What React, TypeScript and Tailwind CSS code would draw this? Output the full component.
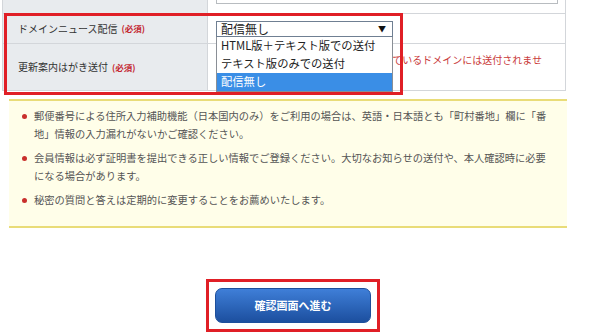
import React from "react";

const Req = () => (
  <span className="ml-[4px] text-[8.5px] font-bold text-[#c4262e]">(必須)</span>
);

const Bullet = ({ children }: { children: React.ReactNode }) => (
  <li className="flex">
    <span className="mt-[7px] ml-[13px] mr-[7px] h-[5px] w-[5px] shrink-0 rounded-full bg-[#c9302c]" />
    <span>{children}</span>
  </li>
);

export default function App() {
  return (
    <div className="relative h-[335px] w-[600px] overflow-hidden bg-white font-['Noto_Sans_CJK_JP','Noto_Sans',sans-serif] text-[#333]">
      {/* form table */}
      <div className="ml-[2px] grid w-[564px] grid-cols-[205px_1fr] border-x border-[#d3d6da]">
        {/* partial top row */}
        <div className="h-[14px] border-b border-r border-[#d3d6da] bg-[#e8ebee]" />
        <div className="h-[14px] border-b border-[#d3d6da] bg-white pl-[8px]">
          <div className="h-[4px] w-[342px] border-x border-b border-[#b8bcc0]" />
        </div>

        {/* row 1 */}
        <div className="flex h-[30px] items-center border-b border-r border-[#d3d6da] bg-[#e8ebee] pl-[15px] text-[10px] leading-none">
          ドメインニュース配信
          <Req />
        </div>
        <div className="relative z-10 h-[30px] border-b border-[#d3d6da] bg-white pl-[8px] pt-[7px]">
          <div className="relative w-[177px]">
            <div className="flex h-[16px] items-center justify-between border border-[#6f7f92] bg-white pl-[4px] pr-[6px] text-[12px] leading-none text-[#222]">
              <span>配信無し</span>
              <span className="text-[8px] text-[#111]">▼</span>
            </div>
            <div className="absolute left-0 top-full w-[177px] whitespace-nowrap border-x border-b border-[#8a8f96] bg-white text-[11.3px] leading-none text-[#222]">
              <div className="flex h-[18px] items-center pl-[4px]">HTML版＋テキスト版での送付</div>
              <div className="flex h-[18px] items-center pl-[4px]">テキスト版のみでの送付</div>
              <div className="flex h-[18px] items-center bg-[#3a8ee6] pl-[4px] text-white">配信無し</div>
            </div>
          </div>
        </div>

        {/* row 2 */}
        <div className="flex h-[47px] items-center border-b border-r border-[#d3d6da] bg-[#e8ebee] pl-[15px] text-[10px] leading-none">
          更新案内はがき送付
          <Req />
        </div>
        <div className="flex h-[47px] items-center border-b border-[#d3d6da] bg-white pl-[25px]">
          <p className="w-[318px] text-[10px] leading-[14px] text-[#c93a3a]">
            ※ドメインニュースの配信を停止しているドメインには送付されません
          </p>
        </div>
      </div>

      {/* red annotation around select rows */}
      <div className="pointer-events-none absolute left-[4px] top-[13px] z-20 h-[82px] w-[399px] border-[3px] border-[#e01f26]" />

      {/* notice box */}
      <div className="ml-[9px] mt-[8px] w-[558px] border-y-2 border-[#e9dc78] bg-[#fffee9] pb-[17px] pt-[6px] text-[10.25px] leading-[18px] text-[#555]">
        <ul className="flex flex-col gap-[6px]">
          <Bullet>
            郵便番号による住所入力補助機能（日本国内のみ）をご利用の場合は、英語・日本語とも「町村番地」欄に「番
            <br />
            地」情報の入力漏れがないかご確認ください。
          </Bullet>
          <Bullet>
            会員情報は必ず証明書を提出できる正しい情報でご登録ください。大切なお知らせの送付や、本人確認時に必要
            <br />
            になる場合があります。
          </Bullet>
          <Bullet>秘密の質問と答えは定期的に変更することをお薦めいたします。</Bullet>
        </ul>
      </div>

      {/* submit button with red annotation */}
      <div className="ml-[206px] mt-[51px] h-[53px] w-[174px] border-[3px] border-[#e01f26] p-[6px]">
        <button className="flex h-[35px] w-[156px] items-center justify-center rounded-[7px] border border-[#1d4f9c] bg-gradient-to-b from-[#3f7fd8] to-[#1c4f9f] text-[11px] font-bold text-white">
          確認画面へ進む
        </button>
      </div>
    </div>
  );
}
